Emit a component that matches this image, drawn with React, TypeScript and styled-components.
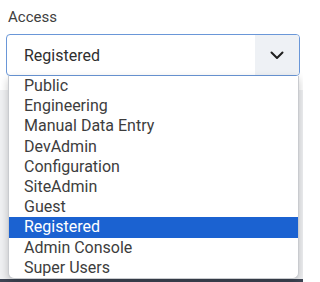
import React from 'react'
import styled, { createGlobalStyle } from 'styled-components'

const GlobalStyle = createGlobalStyle`
  html, body {
    margin: 0;
    padding: 0;
    background: #ffffff;
    font-family: Roboto, "Liberation Sans", Arial, sans-serif;
  }
`

const Page = styled.div`
  display: flex;
  flex-direction: column;
  width: 303px;
  height: 282px;
  overflow: hidden;
`

const Field = styled.div`
  display: flex;
  flex-direction: column;
  padding: 7px 3px 0 6px;
  position: relative;
  z-index: 2;
`

const Label = styled.label`
  font-size: 15px;
  line-height: 20px;
  color: #404040;
  margin: 0 0 7px 2px;
`

const SelectBox = styled.div`
  position: relative;
  display: flex;
  align-items: stretch;
  height: 40px;
  border: 1px solid #6a97d8;
  border-radius: 4px;
  background: #ffffff;
`

const Value = styled.div`
  flex: 1;
  display: flex;
  align-items: center;
  padding-left: 17px;
  font-size: 16px;
  color: #2f2f2f;
`

const ChevronCell = styled.div`
  width: 44px;
  display: flex;
  align-items: center;
  justify-content: center;
  background: #eef1f5;
  border-radius: 0 3px 3px 0;
`

const Menu = styled.ul`
  position: absolute;
  top: 100%;
  left: 0;
  right: 0;
  margin: 1px 0 0 1px;
  padding: 0;
  list-style: none;
  background: #ffffff;
  border: 1px solid #c9cbcf;
  border-top: none;
  border-radius: 0 0 6px 6px;
  box-shadow: 0 3px 8px rgba(0, 0, 0, 0.22);
  overflow: hidden;
`

const Option = styled.li<{ selected?: boolean }>`
  height: 20.2px;
  line-height: 20px;
  padding-left: 15px;
  font-size: 16px;
  color: ${({ selected }) => (selected ? '#ffffff' : '#3d3d3d')};
  background: ${({ selected }) => (selected ? '#1b62d1' : 'transparent')};
  white-space: nowrap;
`

const Backdrop = styled.div`
  flex: 1;
  margin-top: 14px;
  background: #f0f1f3;
`

const Footer = styled.div`
  height: 3px;
  background: #3e4554;
`

const Chevron = () => (
  <svg width='14' height='9' viewBox='0 0 14 9' fill='none'>
    <path d='M1.5 1.5 L7 7 L12.5 1.5' stroke='#1f1f1f' strokeWidth='2' strokeLinecap='round' strokeLinejoin='round' />
  </svg>
)

const options = [
  'Public',
  'Engineering',
  'Manual Data Entry',
  'DevAdmin',
  'Configuration',
  'SiteAdmin',
  'Guest',
  'Registered',
  'Admin Console',
  'Super Users'
]

export default function App () {
  const current = 'Registered'
  return (
    <Page>
      <GlobalStyle />
      <Field>
        <Label>Access</Label>
        <SelectBox>
          <Value>{current}</Value>
          <ChevronCell>
            <Chevron />
          </ChevronCell>
          <Menu>
            {options.map(o => (
              <Option key={o} selected={o === current}>{o}</Option>
            ))}
          </Menu>
        </SelectBox>
      </Field>
      <Backdrop />
      <Footer />
    </Page>
  )
}
